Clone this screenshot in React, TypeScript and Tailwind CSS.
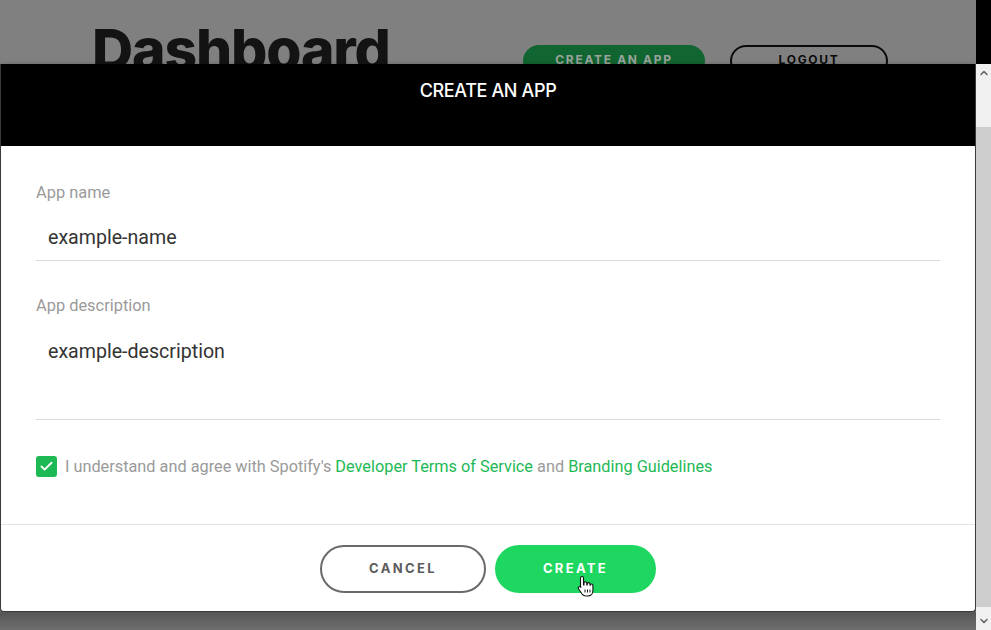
import { Check, ChevronUp, ChevronDown } from "lucide-react";

const sans = { fontFamily: "Roboto, 'Liberation Sans', sans-serif" };
const geo = { fontFamily: "Inter, 'Liberation Sans', sans-serif" };

function HandCursor() {
  return (
    <svg width="18" height="22" viewBox="0 0 18 22" className="absolute left-[577px] top-[575px]">
      <path
        d="M5 1.5c.9 0 1.5.6 1.5 1.5v7h.5V8.2c0-.8.6-1.4 1.4-1.4s1.4.6 1.4 1.4V10h.4V9c0-.8.6-1.4 1.4-1.4s1.4.6 1.4 1.4v1.3h.3c0-.8.6-1.3 1.3-1.3s1.3.6 1.3 1.4v5.2c0 3.2-2.2 5.4-5.2 5.4H9c-1.8 0-3-.7-4.1-2.2L1.6 14c-.5-.7-.4-1.6.3-2.1.7-.5 1.6-.3 2.1.4l-.5-.1V3c0-.9.6-1.5 1.5-1.5z"
        fill="#fff"
        stroke="#111"
        strokeWidth="1.1"
        strokeLinejoin="round"
      />
      <path d="M8 14.5v3M10.5 14.5v3M13 14.5v3" stroke="#111" strokeWidth="1" />
    </svg>
  );
}

export default function App() {
  return (
    <div className="relative h-[630px] w-[991px] overflow-hidden bg-[#808080]">
      {/* page behind the modal */}
      <div className="flex items-start pl-[92px] pr-[103px] pt-[21px]">
        <h1 className="text-[57px] font-extrabold leading-none tracking-[-0.02em] text-[#131313]" style={geo}>
          Dashboard
        </h1>
        <div className="ml-auto mt-[24px] flex gap-[25px]">
          <div
            className="flex h-[32px] w-[182px] items-center justify-center rounded-full bg-[#116530] pb-[2px] text-[12px] font-bold tracking-[0.14em] text-[#9aa39d]"
            style={geo}
          >
            CREATE AN APP
          </div>
          <div
            className="flex h-[32px] w-[158px] items-center justify-center rounded-full border-2 border-[#0a0a0a] pb-[2px] text-[12px] font-bold tracking-[0.14em] text-[#0a0a0a]"
            style={geo}
          >
            LOGOUT
          </div>
        </div>
      </div>

      {/* black strip above the frame scrollbar */}
      <div className="absolute right-0 top-0 h-[64px] w-[15px] bg-black" />

      {/* modal frame */}
      <div className="absolute bottom-0 left-0 right-0 top-[64px] flex">
        <div className="flex w-[976px] flex-col">
          <div className="flex h-[548px] flex-col overflow-hidden rounded-b-[4px] border-x border-b border-[#3a3a3a] bg-white shadow-[0_2px_6px_rgba(0,0,0,0.4)]">
            {/* header */}
            <div className="flex h-[82px] shrink-0 justify-center bg-black pt-[16px]">
              <h2 className="text-[18px] font-medium leading-[21px] tracking-[-0.02em] text-white" style={geo}>
                CREATE AN APP
              </h2>
            </div>

            {/* body */}
            <div className="flex flex-col px-[35px] pt-[37px]" style={sans}>
              <label className="text-[16.4px] leading-[20px] text-[#9a9a9a]">App name</label>
              <div className="mt-[13px] flex h-[45px] items-center border-b border-[#d9d9d9] px-[12px] text-[19.6px] text-[#333]">
                example-name
              </div>

              <label className="mt-[35px] text-[16.4px] leading-[20px] text-[#9a9a9a]">App description</label>
              <div className="mt-[13px] h-[91px] border-b border-[#d9d9d9] px-[12px] pt-[10px] text-[19.6px] leading-[26px] text-[#333]">
                example-description
              </div>

              <div className="mt-[36px] flex items-center gap-[8px] text-[16.3px] leading-[21px] text-[#9a9a9a]">
                <span className="flex size-[21px] shrink-0 items-center justify-center rounded-[3px] bg-[#1db954]">
                  <Check className="size-[15px] text-white" strokeWidth={3} />
                </span>
                <span>
                  I understand and agree with Spotify's{" "}
                  <span className="text-[#1db954]">Developer Terms of Service</span> and{" "}
                  <span className="text-[#1db954]">Branding Guidelines</span>
                </span>
              </div>
            </div>

            {/* footer */}
            <div className="mt-[47px] flex flex-1 justify-center gap-[9px] border-t border-[#e3e3e3] pt-[20px]" style={geo}>
              <button className="h-[48px] w-[166px] rounded-full border-2 border-[#6a6a6a] text-[13px] font-bold tracking-[0.18em] text-[#5c5c5c]">
                CANCEL
              </button>
              <button className="h-[48px] w-[161px] rounded-full bg-[#1ed760] text-[13px] font-bold tracking-[0.18em] text-white">
                CREATE
              </button>
            </div>
          </div>
          <div className="flex-1 bg-gradient-to-b from-[#555555] to-[#6f6f6f]" />
        </div>

        {/* frame scrollbar */}
        <div className="flex w-[15px] flex-col bg-[#f0f0f0]">
          <div className="flex h-[63px] justify-center pt-[3px]">
            <ChevronUp className="size-[12px] text-[#606060]" strokeWidth={3} />
          </div>
          <div className="h-[480px] bg-[#cdcdcd]" />
          <div className="flex flex-1 items-end justify-center pb-[3px]">
            <ChevronDown className="size-[12px] text-[#606060]" strokeWidth={3} />
          </div>
        </div>
      </div>

      <HandCursor />
    </div>
  );
}
